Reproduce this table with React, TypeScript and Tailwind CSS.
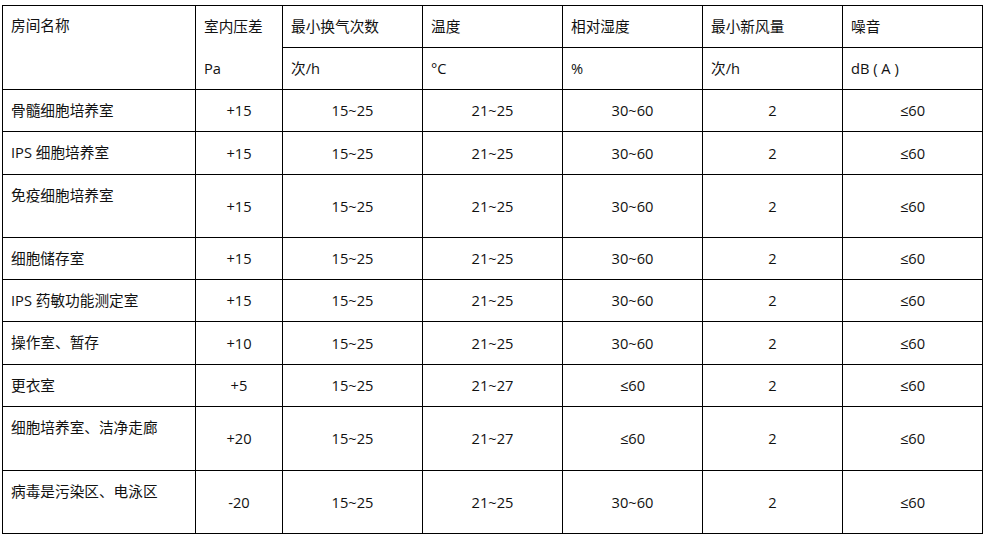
import React from 'react';

type Row = {
  name: string;
  pa: string;
  ach: string;
  temp: string;
  rh: string;
  fresh: string;
  noise: string;
  h: string;
};

const ROWS: Row[] = [
  { name: '骨髓细胞培养室', pa: '+15', ach: '15~25', temp: '21~25', rh: '30~60', fresh: '2', noise: '≤60', h: 'h-[42px]' },
  { name: 'IPS 细胞培养室', pa: '+15', ach: '15~25', temp: '21~25', rh: '30~60', fresh: '2', noise: '≤60', h: 'h-[43px]' },
  { name: '免疫细胞培养室', pa: '+15', ach: '15~25', temp: '21~25', rh: '30~60', fresh: '2', noise: '≤60', h: 'h-[63px]' },
  { name: '细胞储存室', pa: '+15', ach: '15~25', temp: '21~25', rh: '30~60', fresh: '2', noise: '≤60', h: 'h-[42px]' },
  { name: 'IPS 药敏功能测定室', pa: '+15', ach: '15~25', temp: '21~25', rh: '30~60', fresh: '2', noise: '≤60', h: 'h-[42px]' },
  { name: '操作室、暂存', pa: '+10', ach: '15~25', temp: '21~25', rh: '30~60', fresh: '2', noise: '≤60', h: 'h-[43px]' },
  { name: '更衣室', pa: '+5', ach: '15~25', temp: '21~27', rh: '≤60', fresh: '2', noise: '≤60', h: 'h-[42px]' },
  { name: '细胞培养室、洁净走廊', pa: '+20', ach: '15~25', temp: '21~27', rh: '≤60', fresh: '2', noise: '≤60', h: 'h-[64px]' },
  { name: '病毒是污染区、电泳区', pa: '-20', ach: '15~25', temp: '21~25', rh: '30~60', fresh: '2', noise: '≤60', h: 'h-[63px]' },
];

const cell = 'border border-black px-2 align-middle';
const num = `${cell} text-center`;
const head = `${cell} text-left font-normal`;

export default function App() {
  return (
    <div className="w-[986px] h-[537px] bg-white overflow-hidden pt-[5px] pl-[2px] text-[14.67px] text-[#111] [font-family:'Open_Sans','Noto_Sans_CJK_SC',sans-serif] leading-none">
      <table className="table-fixed border-collapse w-[980px]">
        <colgroup>
          <col className="w-[193px]" />
          <col className="w-[87px]" />
          <col className="w-[140px]" />
          <col className="w-[140px]" />
          <col className="w-[140px]" />
          <col className="w-[140px]" />
          <col className="w-[140px]" />
        </colgroup>
        <thead>
          <tr className="h-[42px]">
            <th rowSpan={2} className={`${head} !align-top pt-[12px]`}>房间名称</th>
            <th rowSpan={2} className={head}>
              <div className="flex flex-col gap-[27px]">
                <span>室内压差</span>
                <span>Pa</span>
              </div>
            </th>
            <th className={head}>最小换气次数</th>
            <th className={head}>温度</th>
            <th className={head}>相对湿度</th>
            <th className={head}>最小新风量</th>
            <th className={head}>噪音</th>
          </tr>
          <tr className="h-[42px]">
            <th className={head}>次/h</th>
            <th className={head}>°C</th>
            <th className={head}>%</th>
            <th className={head}>次/h</th>
            <th className={head}>dB ( A )</th>
          </tr>
        </thead>
        <tbody>
          {ROWS.map((r) => (
            <tr key={r.name} className={r.h}>
              <td className={`${cell} !align-top pt-[13px]`}>{r.name}</td>
              <td className={num}>{r.pa}</td>
              <td className={num}>{r.ach}</td>
              <td className={num}>{r.temp}</td>
              <td className={num}>{r.rh}</td>
              <td className={num}>{r.fresh}</td>
              <td className={num}>{r.noise}</td>
            </tr>
          ))}
        </tbody>
      </table>
    </div>
  );
}
